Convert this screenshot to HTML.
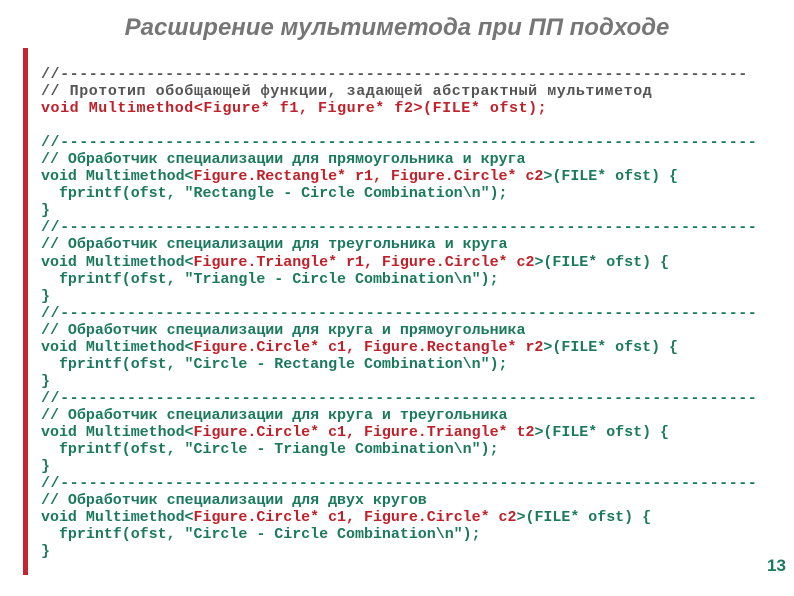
<!DOCTYPE html>
<html><head><meta charset="utf-8"><style>
body{margin:0;width:794px;height:596px;background:#fff;position:relative;overflow:hidden}
.t{position:absolute;left:0;width:794px;top:14px;text-align:center;font:italic bold 24px "Liberation Sans",sans-serif;color:#767676}
.bar{position:absolute;left:23px;top:48px;width:5px;height:527px;background:#c4262e}
pre{position:absolute;left:41px;top:66px;margin:0;font:bold 15px/17.05px "Liberation Mono","DejaVu Sans Mono",monospace;color:#1b7a5c;white-space:pre;letter-spacing:-0.03px}
.g{color:#555}.r{color:#c0202a}
.d{letter-spacing:0.55px}.p{letter-spacing:0.55px}.q{letter-spacing:0.55px}
.n{position:absolute;left:767px;top:556px;font:bold 17px "Liberation Sans",sans-serif;color:#1b7a5c}
</style></head><body>
<div class="t">Расширение мультиметода при ПП подходе</div>
<div class="bar"></div>
<pre><span class="g d">//------------------------------------------------------------------------</span>
<span class="g p">// Прототип обобщающей функции, задающей абстрактный мультиметод</span>
<span class="r q">void Multimethod&lt;Figure* f1, Figure* f2&gt;(FILE* ofst);</span>

<span class="d">//-------------------------------------------------------------------------</span>
// Обработчик специализации для прямоугольника и круга
void Multimethod&lt;<span class="r">Figure.Rectangle* r1, Figure.Circle* c2</span>&gt;(FILE* ofst) {
  fprintf(ofst, "Rectangle - Circle Combination\n");
}
<span class="d">//-------------------------------------------------------------------------</span>
// Обработчик специализации для треугольника и круга
void Multimethod&lt;<span class="r">Figure.Triangle* r1, Figure.Circle* c2</span>&gt;(FILE* ofst) {
  fprintf(ofst, "Triangle - Circle Combination\n");
}
<span class="d">//-------------------------------------------------------------------------</span>
// Обработчик специализации для круга и прямоугольника
void Multimethod&lt;<span class="r">Figure.Circle* c1, Figure.Rectangle* r2</span>&gt;(FILE* ofst) {
  fprintf(ofst, "Circle - Rectangle Combination\n");
}
<span class="d">//-------------------------------------------------------------------------</span>
// Обработчик специализации для круга и треугольника
void Multimethod&lt;<span class="r">Figure.Circle* c1, Figure.Triangle* t2</span>&gt;(FILE* ofst) {
  fprintf(ofst, "Circle - Triangle Combination\n");
}
<span class="d">//-------------------------------------------------------------------------</span>
// Обработчик специализации для двух кругов
void Multimethod&lt;<span class="r">Figure.Circle* c1, Figure.Circle* c2</span>&gt;(FILE* ofst) {
  fprintf(ofst, "Circle - Circle Combination\n");
}</pre>
<div class="n">13</div>
</body></html>
